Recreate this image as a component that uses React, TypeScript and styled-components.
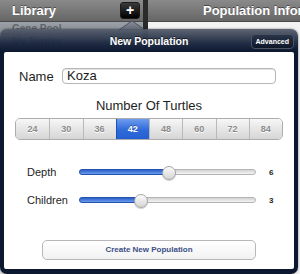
import styled, { createGlobalStyle } from 'styled-components';

const Global = createGlobalStyle`
  html, body {
    margin: 0;
    padding: 0;
    background: #ffffff;
  }
  body {
    font-family: 'Liberation Sans', Arial, sans-serif;
    width: 300px;
    height: 274px;
    overflow: hidden;
  }
`;

const TURTLES = ['24', '30', '36', '42', '48', '60', '72', '84'];

const App = () => {
  return (
    <Screen>
      <Global />
      <Split>
        <LibraryPanel>
          <PanelHeader>
            <HeaderTitle>Library</HeaderTitle>
            <AddButton>+</AddButton>
          </PanelHeader>
          <LibraryRow>Gene Pool</LibraryRow>
          <LibraryRow dim>My Turtles</LibraryRow>
        </LibraryPanel>
        <Divider />
        <InfoPanel>
          <PanelHeader info>
            <HeaderTitle>Population Information</HeaderTitle>
          </PanelHeader>
        </InfoPanel>
      </Split>

      <Popover>
        <Arrow width="26" height="10" viewBox="0 0 26 10">
          <defs>
            <linearGradient id="arrowFill" x1="0" y1="0" x2="0" y2="1">
              <stop offset="0" stopColor="#8d939c" />
              <stop offset="1" stopColor="#5d6472" />
            </linearGradient>
          </defs>
          <path d="M0 10 L13 0.8 L26 10 Z" fill="url(#arrowFill)" stroke="#3c4350" strokeWidth="0.8" />
        </Arrow>
        <PopHeader>
          <span />
          <PopTitle>New Population</PopTitle>
          <AdvancedButton>Advanced</AdvancedButton>
        </PopHeader>
        <Sheet>
          <NameRow>
            <NameLabel>Name</NameLabel>
            <NameField>Koza</NameField>
          </NameRow>
          <SectionTitle>Number Of Turtles</SectionTitle>
          <Segments>
            {TURTLES.map((n) => (
              <Segment key={n} active={n === '42'}>
                {n}
              </Segment>
            ))}
          </Segments>
          <Sliders>
            <SliderRow>
              <SliderLabel>Depth</SliderLabel>
              <Track>
                <Fill style={{ width: '50%' }} />
                <Thumb style={{ left: '50%' }} />
              </Track>
              <SliderValue>6</SliderValue>
            </SliderRow>
            <SliderRow>
              <SliderLabel>Children</SliderLabel>
              <Track>
                <Fill style={{ width: '34%' }} />
                <Thumb style={{ left: '34%' }} />
              </Track>
              <SliderValue>3</SliderValue>
            </SliderRow>
          </Sliders>
          <CreateButton>Create New Population</CreateButton>
        </Sheet>
      </Popover>
    </Screen>
  );
};

export default App;

const Screen = styled.div`
  position: relative;
  width: 300px;
  height: 274px;
  background: #ffffff;
  overflow: hidden;
`;

const Split = styled.div`
  display: flex;
  height: 100%;
`;

const LibraryPanel = styled.div`
  width: 143px;
  flex-shrink: 0;
  display: flex;
  flex-direction: column;
  background: #d9dbde;
`;

const Divider = styled.div`
  width: 5px;
  flex-shrink: 0;
  background: #2a2a2a;
`;

const InfoPanel = styled.div`
  flex: 1;
  min-width: 0;
  background: #f2f2f2;
`;

const PanelHeader = styled.div<{ info?: boolean }>`
  height: 21px;
  display: flex;
  align-items: center;
  justify-content: space-between;
  padding: 0 3px 0 ${(p) => (p.info ? '55px' : '12px')};
  background: linear-gradient(#8a8a8a, #666666);
  border-bottom: 1px solid #4a4a4a;
  white-space: nowrap;
  overflow: hidden;
`;

const HeaderTitle = styled.span`
  color: #ffffff;
  font-size: 13px;
  font-weight: bold;
  text-shadow: 0 -1px 0 rgba(0, 0, 0, 0.45);
`;

const AddButton = styled.div`
  width: 18px;
  height: 15px;
  border-radius: 3px;
  background: linear-gradient(#3a3a3a, #000000);
  border: 1px solid #1a1a1a;
  color: #ffffff;
  font-size: 14px;
  font-weight: bold;
  line-height: 14px;
  text-align: center;
`;

const LibraryRow = styled.div<{ dim?: boolean }>`
  height: 12px;
  padding: 1px 0 0 12px;
  font-size: 10px;
  font-weight: bold;
  color: ${(p) => (p.dim ? '#2f3a55' : '#5d636b')};
  background: ${(p) => (p.dim ? '#c9ccd1' : 'linear-gradient(#9ba0a7, #858a92)')};
  line-height: 11px;
`;

const Popover = styled.div`
  position: absolute;
  left: 0;
  top: 29px;
  width: 290px;
  height: 240px;
  padding: 0 4px 5px 4px;
  border-radius: 7px;
  background: linear-gradient(
    rgba(88, 96, 110, 0.96) 0px,
    rgba(28, 40, 64, 0.97) 14px,
    #0c1730 23px,
    #0c1730 100%
  );
  box-shadow: 0 0 2px rgba(0, 0, 0, 0.6);
  display: flex;
  flex-direction: column;
`;

const Arrow = styled.svg`
  position: absolute;
  left: 119px;
  top: -9px;
`;

const PopHeader = styled.div`
  height: 23px;
  display: grid;
  grid-template-columns: 40px 1fr 40px;
  align-items: center;
`;

const PopTitle = styled.div`
  text-align: center;
  color: #ffffff;
  font-size: 10.5px;
  font-weight: bold;
  text-shadow: 0 -1px 0 rgba(0, 0, 0, 0.6);
  padding-top: 1px;
`;

const AdvancedButton = styled.div`
  justify-self: end;
  height: 13px;
  padding: 0 4px;
  border-radius: 4px;
  border: 1px solid #4b5365;
  background: linear-gradient(#2a3448, #0d1629);
  color: #ffffff;
  font-size: 7px;
  font-weight: bold;
  line-height: 13px;
  margin-top: 1px;
`;

const Sheet = styled.div`
  flex: 1;
  background: #ffffff;
  border-radius: 2px;
  padding: 0 11px;
  display: flex;
  flex-direction: column;
`;

const NameRow = styled.div`
  display: flex;
  align-items: center;
  margin-top: 16px;
  padding: 0 7px 0 4px;
`;

const NameLabel = styled.span`
  font-size: 13px;
  color: #1e1e1e;
  width: 43px;
`;

const NameField = styled.div`
  flex: 1;
  height: 14px;
  border: 1px solid #b7b7b7;
  border-radius: 4px;
  box-shadow: inset 0 1px 1px rgba(0, 0, 0, 0.12);
  padding: 0 4px;
  font-size: 13px;
  line-height: 14px;
  color: #1a1a1a;
`;

const SectionTitle = styled.div`
  text-align: center;
  font-size: 13px;
  color: #1e1e1e;
  margin-top: 14px;
`;

const Segments = styled.div`
  display: grid;
  grid-template-columns: repeat(8, 1fr);
  height: 20px;
  margin-top: 5px;
  border: 1px solid #acacac;
  border-radius: 5px;
  overflow: hidden;
`;

const Segment = styled.div<{ active?: boolean }>`
  display: flex;
  align-items: center;
  justify-content: center;
  font-size: 9px;
  font-weight: bold;
  color: ${(p) => (p.active ? '#ffffff' : '#8a8a8a')};
  background: ${(p) =>
    p.active
      ? 'linear-gradient(#6e9cef, #2f6ad9 55%, #2460d2)'
      : 'linear-gradient(#f7f7f7, #e4e4e4 55%, #d6d6d6)'};
  border-left: 1px solid ${(p) => (p.active ? '#1f4fb0' : '#b9b9b9')};
  text-shadow: ${(p) => (p.active ? '0 -1px 0 rgba(0,0,0,0.3)' : '0 1px 0 #ffffff')};

  &:first-child {
    border-left: none;
  }
`;

const Sliders = styled.div`
  display: flex;
  flex-direction: column;
  gap: 14px;
  margin-top: 25px;
`;

const SliderRow = styled.div`
  display: flex;
  align-items: center;
  height: 14px;
  padding-left: 12px;
`;

const SliderLabel = styled.span`
  width: 52px;
  font-size: 11px;
  color: #1e1e1e;
`;

const Track = styled.div`
  position: relative;
  width: 175px;
  height: 4px;
  border-radius: 3px;
  border: 1px solid #b4b4b4;
  background: linear-gradient(#d2d2d2, #f4f4f4);
`;

const Fill = styled.div`
  position: absolute;
  left: -1px;
  top: -1px;
  bottom: -1px;
  border-radius: 3px 0 0 3px;
  background: linear-gradient(#2b5fc4, #6b9cf0);
  border: 1px solid #2454b0;
`;

const Thumb = styled.div`
  position: absolute;
  top: 50%;
  width: 12px;
  height: 12px;
  margin: -6px 0 0 -6px;
  border-radius: 50%;
  border: 1px solid #a5a5a5;
  background: linear-gradient(#fbfbfb, #d5d5d5);
  box-shadow: 0 1px 1px rgba(0, 0, 0, 0.2);
`;

const SliderValue = styled.span`
  margin-left: 13px;
  font-size: 8px;
  font-weight: bold;
  color: #1e1e1e;
`;

const CreateButton = styled.div`
  margin: auto 27px 9px 27px;
  height: 18px;
  border: 1px solid #b7b7b7;
  border-radius: 5px;
  background: linear-gradient(#ffffff, #f2f2f2);
  text-align: center;
  font-size: 8px;
  font-weight: bold;
  line-height: 18px;
  color: #3b4f86;
`;
